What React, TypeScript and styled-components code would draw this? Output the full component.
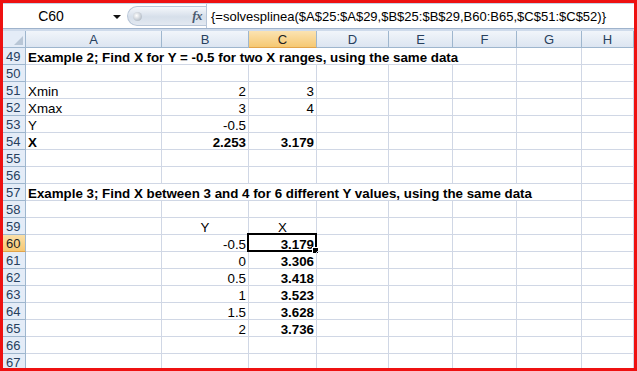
import React from "react";
import styled, { createGlobalStyle, css } from "styled-components";

const Global = createGlobalStyle`
  html, body { margin: 0; padding: 0; background: #ffffff; }
  body { width: 637px; height: 371px; overflow: hidden; font-family: "Liberation Sans", Arial, sans-serif; }
`;

const Frame = styled.div`
  box-sizing: border-box;
  width: 637px;
  height: 371px;
  border: 3px solid #ee1111;
  display: flex;
  flex-direction: column;
  overflow: hidden;
  background: #ffffff;
`;

const FormulaBar = styled.div`
  display: flex;
  align-items: stretch;
  height: 25px;
  flex: none;
  background: #ffffff;
  border-top: 1px solid #c5d3e6;
  box-sizing: border-box;
`;

const NameBox = styled.div`
  width: 124px;
  display: flex;
  align-items: center;
  font-size: 14px;
  color: #000;
`;

const NameText = styled.span`
  flex: 1;
  text-align: center;
  padding-right: 14px;
`;

const DropArrow = styled.span`
  width: 0;
  height: 0;
  border-left: 4px solid transparent;
  border-right: 4px solid transparent;
  border-top: 4px solid #111;
  margin-right: 6px;
  margin-top: 1px;
`;

const Pill = styled.div`
  width: 79px;
  margin: 2px 0;
  border-radius: 11px 0 0 11px;
  background: linear-gradient(#f4f7fb, #d6dfea 55%, #e3e9f1);
  border: 1px solid #b8c6d8;
  border-right: none;
  display: flex;
  align-items: center;
  justify-content: space-between;
  padding: 0 4px 0 5px;
  box-sizing: border-box;
`;

const Knob = styled.span`
  width: 9px;
  height: 9px;
  border-radius: 50%;
  background: radial-gradient(circle at 40% 40%, #ffffff, #9aa6b4);
`;

const Fx = styled.span`
  font-family: "Liberation Serif", "Times New Roman", serif;
  font-style: italic;
  font-weight: bold;
  font-size: 13px;
  color: #4a5a70;
  letter-spacing: -0.5px;
`;

const FormulaInput = styled.div`
  flex: 1;
  border-left: 1px solid #b8c6d8;
  display: flex;
  align-items: center;
  padding-left: 4px;
  font-size: 13px;
  color: #000;
  white-space: nowrap;
  overflow: hidden;
`;

const BarGap = styled.div`
  height: 3px;
  flex: none;
  background: #cfdbeb;
  border-top: 1px solid #9fb3cc;
  box-sizing: border-box;
`;

const COLS = "23px 136px 87px 68px 72px 64px 64px 65px 1fr";

const Grid = styled.div`
  display: grid;
  grid-template-columns: ${COLS};
  grid-auto-rows: 17px;
  flex: 1;
  font-size: 13.33px;
`;

const headerBase = css`
  box-sizing: border-box;
  border-right: 1px solid #9eb6ce;
  border-bottom: 1px solid #9eb6ce;
  color: #27405e;
  display: flex;
  align-items: center;
  font-size: 13px;
`;

const Corner = styled.div`
  ${headerBase};
  background: #e4ecf7;
  position: relative;
  &::after {
    content: "";
    position: absolute;
    right: 2px;
    bottom: 2px;
    width: 0;
    height: 0;
    border-left: 9px solid transparent;
    border-bottom: 9px solid #b8c6d6;
  }
`;

const ColHead = styled.div<{ $active?: boolean }>`
  ${headerBase};
  justify-content: center;
  background: ${(p) =>
    p.$active
      ? "linear-gradient(#fbe3b2, #f6c872)"
      : "linear-gradient(#f1f5fa, #dce5f1)"};
  ${(p) => p.$active && "border-bottom-color: #e2a44a; color: #222;"}
`;

const RowHead = styled.div<{ $active?: boolean }>`
  ${headerBase};
  justify-content: flex-start;
  padding-left: 3px;
  padding-top: 1px;
  background: ${(p) => (p.$active ? "linear-gradient(#fbe0a8, #f6c872)" : "#e4ecf7")};
  ${(p) => p.$active && "color: #222; border-bottom-color: #e2a44a;"}
`;

const Cell = styled.div<{
  $align?: "left" | "right" | "center";
  $bold?: boolean;
  $span?: number;
}>`
  box-sizing: border-box;
  border-right: 1px solid #d0d7e5;
  border-bottom: 1px solid #d0d7e5;
  padding: 2px 2px 0;
  line-height: 15px;
  white-space: nowrap;
  color: #000;
  position: relative;
  text-align: ${(p) => p.$align || "left"};
  font-weight: ${(p) => (p.$bold ? "bold" : "normal")};
  ${(p) => p.$span && `grid-column: span ${p.$span};`}
`;

const Selection = styled.div`
  position: absolute;
  left: -2px;
  top: -2px;
  right: -1px;
  bottom: -1px;
  border: 2px solid #000;
  pointer-events: none;
  &::after {
    content: "";
    position: absolute;
    right: -4px;
    bottom: -4px;
    width: 5px;
    height: 5px;
    background: #000;
    border: 1px solid #fff;
  }
`;

type CellDef = { text?: string; align?: "left" | "right" | "center"; bold?: boolean; span?: number; selected?: boolean };

const blank = (n: number): CellDef[] => Array.from({ length: n }, () => ({}));

const rows: { n: number; cells: CellDef[] }[] = [
  { n: 49, cells: [{ text: "Example 2; Find X for Y = -0.5 for two X ranges, using the same data", bold: true, span: 6 }, ...blank(2)] },
  { n: 50, cells: blank(8) },
  { n: 51, cells: [{ text: "Xmin" }, { text: "2", align: "right" }, { text: "3", align: "right" }, ...blank(5)] },
  { n: 52, cells: [{ text: "Xmax" }, { text: "3", align: "right" }, { text: "4", align: "right" }, ...blank(5)] },
  { n: 53, cells: [{ text: "Y" }, { text: "-0.5", align: "right" }, ...blank(6)] },
  { n: 54, cells: [{ text: "X", bold: true }, { text: "2.253", align: "right", bold: true }, { text: "3.179", align: "right", bold: true }, ...blank(5)] },
  { n: 55, cells: blank(8) },
  { n: 56, cells: blank(8) },
  { n: 57, cells: [{ text: "Example 3; Find X between 3 and 4 for 6 different Y values, using the same data", bold: true, span: 7 }, ...blank(1)] },
  { n: 58, cells: blank(8) },
  { n: 59, cells: [{}, { text: "Y", align: "center" }, { text: "X", align: "center" }, ...blank(5)] },
  { n: 60, cells: [{}, { text: "-0.5", align: "right" }, { text: "3.179", align: "right", bold: true, selected: true }, ...blank(5)] },
  { n: 61, cells: [{}, { text: "0", align: "right" }, { text: "3.306", align: "right", bold: true }, ...blank(5)] },
  { n: 62, cells: [{}, { text: "0.5", align: "right" }, { text: "3.418", align: "right", bold: true }, ...blank(5)] },
  { n: 63, cells: [{}, { text: "1", align: "right" }, { text: "3.523", align: "right", bold: true }, ...blank(5)] },
  { n: 64, cells: [{}, { text: "1.5", align: "right" }, { text: "3.628", align: "right", bold: true }, ...blank(5)] },
  { n: 65, cells: [{}, { text: "2", align: "right" }, { text: "3.736", align: "right", bold: true }, ...blank(5)] },
  { n: 66, cells: blank(8) },
  { n: 67, cells: blank(8) },
];

const colLetters = ["A", "B", "C", "D", "E", "F", "G", "H"];

export default function App() {
  return (
    <>
      <Global />
      <Frame>
        <FormulaBar>
          <NameBox>
            <NameText>C60</NameText>
            <DropArrow />
          </NameBox>
          <Pill>
            <Knob />
            <Fx>fx</Fx>
          </Pill>
          <FormulaInput>{"{=solvesplinea($A$25:$A$29,$B$25:$B$29,B60:B65,$C$51:$C$52)}"}</FormulaInput>
        </FormulaBar>
        <BarGap />
        <Grid>
          <Corner />
          {colLetters.map((c) => (
            <ColHead key={c} $active={c === "C"}>
              {c}
            </ColHead>
          ))}
          {rows.map((r) => (
            <React.Fragment key={r.n}>
              <RowHead $active={r.n === 60}>{r.n}</RowHead>
              {r.cells.map((c, i) => (
                <Cell key={i} $align={c.align} $bold={c.bold} $span={c.span}>
                  {c.text}
                  {c.selected && <Selection />}
                </Cell>
              ))}
            </React.Fragment>
          ))}
        </Grid>
      </Frame>
    </>
  );
}
